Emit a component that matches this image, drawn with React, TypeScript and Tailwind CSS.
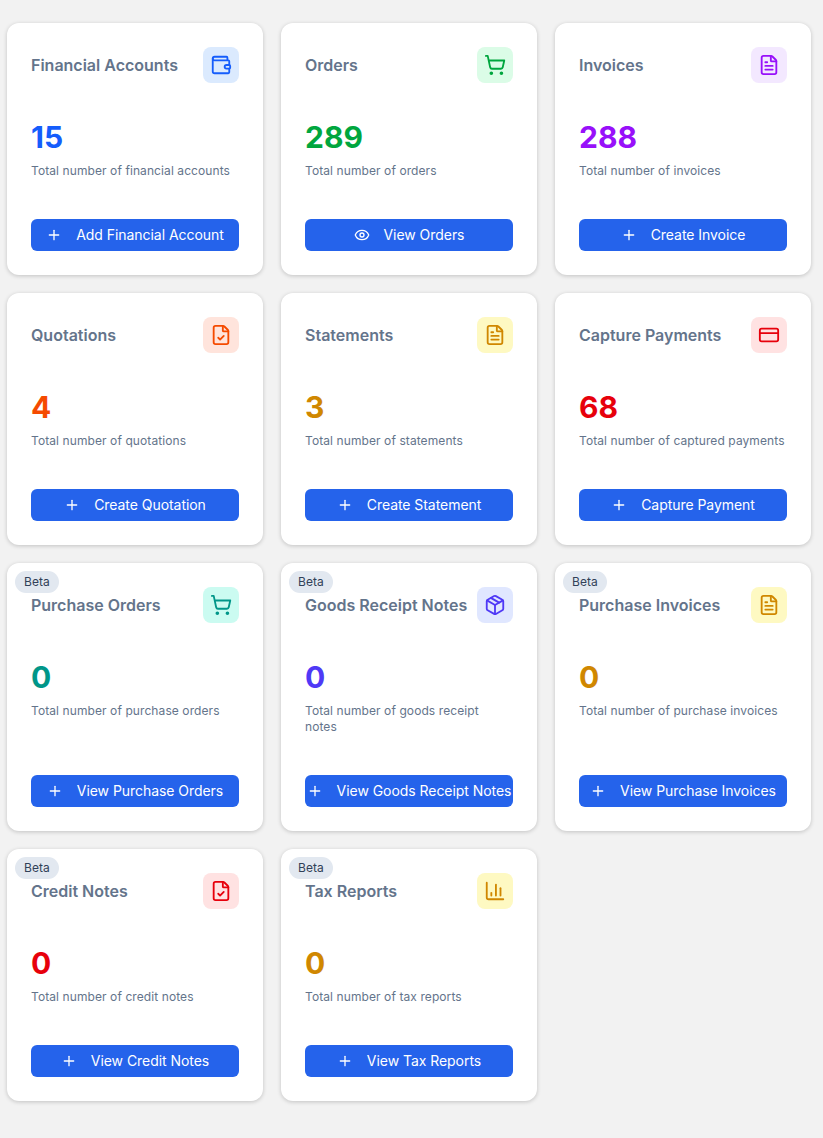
import type { ComponentType } from "react";
import { ChartColumn, CreditCard, Eye, FileCheck, FileText, Package, Plus, ShoppingCart, Wallet } from "lucide-react";

type Stat = {
  title: string;
  value: number;
  desc: string;
  action: string;
  Icon: ComponentType<{ className?: string }>;
  iconBox: string;
  valueColor: string;
  ActionIcon?: ComponentType<{ className?: string }>;
  beta?: boolean;
};

const stats: Stat[] = [
  { title: "Financial Accounts", value: 15, desc: "Total number of financial accounts", action: "Add Financial Account", Icon: Wallet, iconBox: "bg-blue-100 text-blue-600", valueColor: "text-blue-600" },
  { title: "Orders", value: 289, desc: "Total number of orders", action: "View Orders", Icon: ShoppingCart, iconBox: "bg-green-100 text-green-600", valueColor: "text-green-600", ActionIcon: Eye },
  { title: "Invoices", value: 288, desc: "Total number of invoices", action: "Create Invoice", Icon: FileText, iconBox: "bg-purple-100 text-purple-600", valueColor: "text-purple-600" },
  { title: "Quotations", value: 4, desc: "Total number of quotations", action: "Create Quotation", Icon: FileCheck, iconBox: "bg-[#ffe4dc] text-orange-600", valueColor: "text-orange-600" },
  { title: "Statements", value: 3, desc: "Total number of statements", action: "Create Statement", Icon: FileText, iconBox: "bg-yellow-100 text-yellow-600", valueColor: "text-yellow-600" },
  { title: "Capture Payments", value: 68, desc: "Total number of captured payments", action: "Capture Payment", Icon: CreditCard, iconBox: "bg-red-100 text-red-600", valueColor: "text-red-600" },
  { title: "Purchase Orders", value: 0, desc: "Total number of purchase orders", action: "View Purchase Orders", Icon: ShoppingCart, iconBox: "bg-teal-100 text-teal-600", valueColor: "text-teal-600", beta: true },
  { title: "Goods Receipt Notes", value: 0, desc: "Total number of goods receipt notes", action: "View Goods Receipt Notes", Icon: Package, iconBox: "bg-indigo-100 text-indigo-600", valueColor: "text-indigo-600", beta: true },
  { title: "Purchase Invoices", value: 0, desc: "Total number of purchase invoices", action: "View Purchase Invoices", Icon: FileText, iconBox: "bg-yellow-100 text-yellow-600", valueColor: "text-yellow-600", beta: true },
  { title: "Credit Notes", value: 0, desc: "Total number of credit notes", action: "View Credit Notes", Icon: FileCheck, iconBox: "bg-red-100 text-red-600", valueColor: "text-red-600", beta: true },
  { title: "Tax Reports", value: 0, desc: "Total number of tax reports", action: "View Tax Reports", Icon: ChartColumn, iconBox: "bg-yellow-100 text-yellow-600", valueColor: "text-yellow-600", beta: true },
];

function StatCard({ stat }: { stat: Stat }) {
  const { Icon, ActionIcon = Plus } = stat;
  return (
    <div className="relative flex flex-col rounded-xl bg-white p-6 shadow-[0_1px_4px_rgba(0,0,0,0.2)]">
      {stat.beta && (
        <span className="absolute left-2 top-2 rounded-full bg-slate-200 px-[9px] py-[3px] text-xs tracking-[0.09px] text-slate-700">Beta</span>
      )}
      <div className="flex items-center justify-between">
        <h3 className="text-base font-semibold text-[#64748b]">{stat.title}</h3>
        <div className={`flex h-9 w-9 items-center justify-center rounded-lg ${stat.iconBox}`}>
          <Icon className="h-[22px] w-[22px]" />
        </div>
      </div>
      <div className={`mt-9 text-3xl leading-9 font-bold ${stat.valueColor}`}>{stat.value}</div>
      <p className="mt-2 mb-10 text-xs tracking-[0.09px] text-[#64748b]">{stat.desc}</p>
      <button className="mt-auto flex h-8 w-full items-center justify-center gap-3.5 rounded-md bg-[#2563eb] text-sm tracking-[-0.05px] whitespace-nowrap text-white">
        <ActionIcon className="h-4 w-4 shrink-0" />
        {stat.action}
      </button>
    </div>
  );
}

export default function App() {
  return (
    <div className="min-h-[1138px] bg-[#f2f2f2] pt-[23px] pl-[7px] font-['Inter',sans-serif]">
      <div className="grid grid-cols-[256px_256px_256px] gap-[18px]">
        {stats.map((stat) => (
          <StatCard key={stat.title} stat={stat} />
        ))}
      </div>
    </div>
  );
}
